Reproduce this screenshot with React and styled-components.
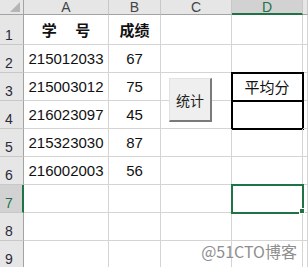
import React from 'react';
import styled, { createGlobalStyle, css } from 'styled-components';

const Global = createGlobalStyle`
  html, body { margin: 0; padding: 0; background: #fff; overflow: hidden; }
  body { font-family: "Liberation Sans", Arial, sans-serif; }
  *, *::before, *::after { box-sizing: border-box; }
`;

const CJK = '"Noto Sans CJK SC", "Liberation Sans", sans-serif';
const GREEN = '#217346';

const Sheet = styled.div`
  position: relative;
  width: 308px;
  height: 267px;
  overflow: hidden;
  display: grid;
  grid-template-columns: 24px 85px 52px 71px 71px 1fr;
  grid-template-rows: 15px 30px repeat(8, 28px);
`;

const Corner = styled.div`
  background: #e6e6e6;
  border-right: 1px solid #a3a3a3;
  border-bottom: 1px solid #a3a3a3;
  display: flex;
  align-items: flex-end;
  justify-content: flex-end;
  padding: 0 3px 2px 0;
`;

const ColHead = styled.div`
  background: ${p => (p.$active ? '#d2d2d2' : '#e6e6e6')};
  border-right: 1px solid #c8c8c8;
  border-bottom: ${p => (p.$active ? `2px solid ${GREEN}` : '1px solid #a3a3a3')};
  display: flex;
  align-items: center;
  justify-content: center;
  font-size: 14px;
  line-height: 1;
  color: ${p => (p.$active ? GREEN : '#444')};
`;

const RowHead = styled.div`
  background: ${p => (p.$active ? '#d2d2d2' : '#e6e6e6')};
  border-right: ${p => (p.$active ? `2px solid ${GREEN}` : '1px solid #a3a3a3')};
  border-bottom: 1px solid #c8c8c8;
  display: flex;
  align-items: flex-end;
  padding: 0 0 2px 5px;
  font-size: 14px;
  line-height: 1;
  color: ${p => (p.$active ? GREEN : '#2a2a3a')};
`;

const Cell = styled.div`
  border-right: 1px solid #d4d4d4;
  border-bottom: 1px solid #d4d4d4;
  display: flex;
  align-items: center;
  justify-content: center;
  font-size: 15px;
  line-height: 1;
  color: #111;
  white-space: pre;
  font-family: ${p => (p.$cjk ? CJK : 'inherit')};
  font-weight: ${p => (p.$bold ? 700 : 400)};
  ${p => p.$boxed && css`
    outline: 2px solid #000;
    outline-offset: -1px;
  `}
  ${p => p.$selected && css`
    position: relative;
    outline: 2px solid ${GREEN};
    outline-offset: -1px;
    &::after {
      content: '';
      position: absolute;
      right: -3px;
      bottom: -2px;
      width: 6px;
      height: 6px;
      background: ${GREEN};
      border: 1px solid #fff;
    }
  `}
`;

const MacroButton = styled.button`
  position: absolute;
  left: 169px;
  top: 78px;
  width: 43px;
  height: 44px;
  padding: 0;
  margin: 0;
  background: #efefef;
  border-top: 1px solid #e2e2e2;
  border-left: 1px solid #e2e2e2;
  border-right: 2px solid #7a7a7a;
  border-bottom: 2px solid #7a7a7a;
  font-family: ${CJK};
  font-size: 14px;
  color: #222;
  display: flex;
  align-items: center;
  justify-content: center;
`;

const Watermark = styled.div`
  position: absolute;
  right: 11px;
  bottom: 8px;
  font-family: ${CJK};
  font-size: 16px;
  line-height: 1;
  color: #8e8e8e;
  text-shadow: 0 0 1px #fff, 0 0 1px #fff;
`;

const rows = [
  ['215012033', '67'],
  ['215003012', '75'],
  ['216023097', '45'],
  ['215323030', '87'],
  ['216002003', '56'],
];

export default function App() {
  const cols = ['A', 'B', 'C', 'D', ''];
  return (
    <>
      <Global />
      <Sheet>
        <Corner>
          <svg width="10" height="10" viewBox="0 0 10 10">
            <polygon points="10,0 10,10 0,10" fill="#b5b5b5" />
          </svg>
        </Corner>
        {cols.map((c, i) => (
          <ColHead key={i} $active={c === 'D'}>{c}</ColHead>
        ))}

        <RowHead>1</RowHead>
        <Cell $cjk $bold>{'学　 号'}</Cell>
        <Cell $cjk $bold>成绩</Cell>
        <Cell />
        <Cell />
        <Cell />

        {rows.map((r, i) => (
          <React.Fragment key={i}>
            <RowHead>{i + 2}</RowHead>
            <Cell>{r[0]}</Cell>
            <Cell>{r[1]}</Cell>
            <Cell />
            <Cell $cjk $boxed={i === 1 || i === 2}>{i === 1 ? '平均分' : ''}</Cell>
            <Cell />
          </React.Fragment>
        ))}

        {[7, 8, 9].map(n => (
          <React.Fragment key={n}>
            <RowHead $active={n === 7}>{n}</RowHead>
            <Cell />
            <Cell />
            <Cell />
            <Cell $selected={n === 7} />
            <Cell />
          </React.Fragment>
        ))}

        <MacroButton>统计</MacroButton>
        <Watermark>@51CTO博客</Watermark>
      </Sheet>
    </>
  );
}
